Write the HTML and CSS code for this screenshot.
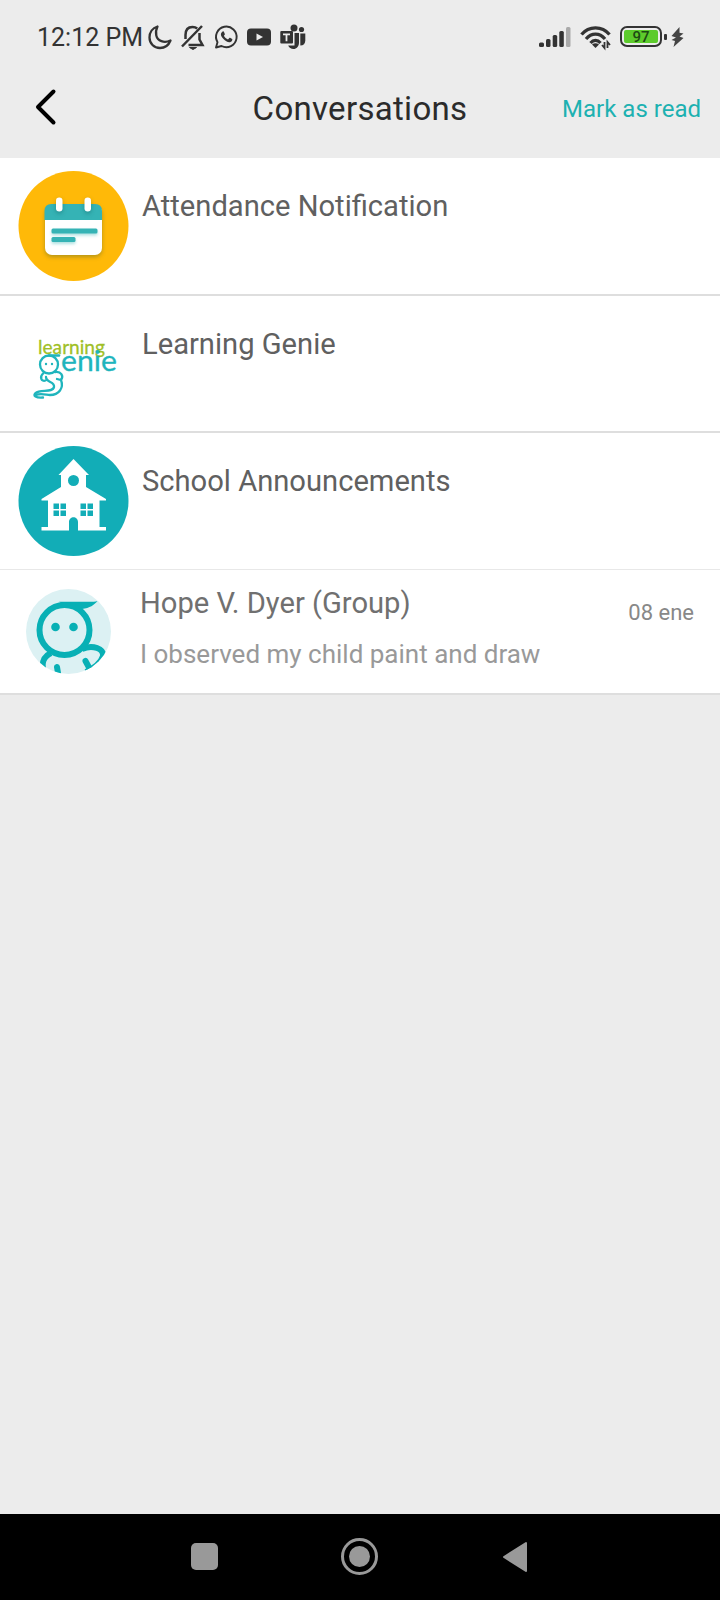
FILE: index.html
```
<!DOCTYPE html>
<html lang="en">
<head>
    <meta charset="UTF-8">
    <meta name="viewport" content="width=device-width, initial-scale=1.0">
    <title>Conversations</title>
    <link rel="stylesheet" href="styles.css">
</head>
<body>

<!-- Status bar -->
<div class="status-bar">
    <span class="clock">12:12 PM</span>
    <div class="status-icons">
        <svg width="24" height="26" viewBox="0 0 24 26" fill="none" stroke="#333" stroke-width="2.3" stroke-linejoin="round">
            <path d="M9.5 2.500C4.5 4 1.500 8.500 1.500 13.500C1.500 19.500 6 24 12 24C16.500 24 20.500 21.500 22.500 16.500C16 19.500 9.500 17 8.300 11.500C7.600 8 8.200 5 9.500 2.500Z"/>
        </svg>
        <svg width="24" height="26" viewBox="0 0 24 26" fill="none" stroke="#333" stroke-width="2.500">
            <path d="M4.500 15V11C4.500 6 7 3 11.500 3C13.500 3 15 3.500 16.200 4.500M18.500 9V15.500L21.500 21H7.500M1 22.500L21 2"/>
            <path d="M8.500 23.500H15.500L12 25.500Z" fill="#333" stroke-width="1"/>
        </svg>
        <svg width="24" height="26" viewBox="0 0 24 26">
            <path d="M2 23.500L3.500 18.200A10.300 10.300 0 1 1 7.500 22Z" fill="none" stroke="#333" stroke-width="1.900" stroke-linejoin="round"/>
            <path d="M8 8C9 7 9.700 7.200 10 8L10.800 10C11 10.700 10.300 11.200 9.900 11.700C10.800 13.500 12.200 14.700 14 15.500L15.300 14.100C15.700 13.700 16.100 13.900 16.500 14.100L18.200 15C18.700 15.400 18 17.500 16.500 18C12.500 19.300 6.500 13 6.900 10C7 9.200 7.500 8.500 8 8Z" fill="#333"/>
        </svg>
        <svg width="24" height="26" viewBox="0 0 24 26">
            <rect x="0" y="4.500" width="24" height="17" rx="4" fill="#333"/>
            <path d="M9.500 9.500L16 13L9.500 16.500Z" fill="#ececec"/>
        </svg>
        <svg width="27" height="26" viewBox="0 0 27 26" fill="#333">
            <circle cx="14" cy="4" r="3.500"/>
            <circle cx="21.500" cy="5.500" r="2.600"/>
            <path d="M14.500 9H19V18.500C19 22.500 16.500 25 13.500 25C11 25 9 23.500 8.200 21.500H14.500Z"/>
            <path d="M20.300 9.500H25.300V16.500C25.300 19.500 23.500 21.500 20.300 21.500Z"/>
            <rect x="0.300" y="7" width="12.700" height="12.500" rx="1"/>
            <path d="M3 10.300H10M6.500 10.300V17.300" fill="none" stroke="#ececec" stroke-width="1.800"/>
        </svg>
    </div>
    <div class="device-icons">
        <svg class="signal" width="32" height="22" viewBox="0 0 32 22" fill="#333">
            <rect x="0" y="16.500" width="5" height="4.500" rx="1.500"/>
            <rect x="7" y="13" width="4.500" height="8" rx="1.500"/>
            <rect x="13.700" y="9" width="4.500" height="12" rx="1.500"/>
            <rect x="20.300" y="5" width="4.500" height="16" rx="1.500"/>
            <rect x="27" y="1" width="4.500" height="20" rx="1.500" fill="#aaa"/>
        </svg>
        <svg class="wifi" width="32" height="24" viewBox="0 0 32 24" fill="none" stroke="#333" stroke-width="3.300">
            <path d="M1.500 9.500C9 0.700 22 0.700 29.500 9.500M6 14C11.500 7.500 19.500 7.500 25 14M10.500 18C13.500 14.500 17.500 14.500 20.500 18"/>
            <path d="M12 19.500Q15.500 17 19 19.500L15.500 23Z" fill="#333" stroke="none"/>
            <path d="M24.500 17V23L22 20M27.500 23V17L30 20" stroke-width="1.800"/>
        </svg>
        <div class="battery"><span>97</span></div>
        <div class="battery-tip"></div>
        <svg class="bolt" width="13" height="20" viewBox="0 0 13 20" fill="#444">
            <path d="M8.500 0L0.500 9L5 10.500L0.500 13L4 14L2.500 20L12.500 11L8.500 9.500L12.500 6.500L8.500 5.800Z"/>
        </svg>
    </div>
</div>

<!-- Header -->
<div class="header">
    <svg class="back" width="24" height="38" viewBox="0 0 24 38" fill="none" stroke="#000" stroke-width="4" stroke-linecap="round" stroke-linejoin="round">
        <path d="M19.500 3.500L4 19L19.500 34.500"/>
    </svg>
    <h1>Conversations</h1>
    <a class="mark-read">Mark as read</a>
</div>

<!-- Conversation list -->
<div class="conversations">
    <div class="row first">
        <svg class="avatar" width="110" height="110" viewBox="0 0 110 110">
            <circle cx="55.500" cy="55" r="55" fill="#ffb908"/>
            <rect class="soft-shadow" x="27" y="34" width="57" height="50" rx="7" fill="#fff"/>
            <path d="M26.500 49V40Q26.500 33 33.500 33H77Q84 33 84 40V49Z" fill="#35b3b5"/>
            <g class="soft-shadow" fill="#fff">
                <rect x="38" y="26.500" width="6.500" height="14" rx="3.200"/>
                <rect x="66.500" y="26.500" width="6.500" height="14" rx="3.200"/>
            </g>
            <g class="line-shadow" fill="#35b3b5">
                <rect x="33.500" y="57.500" width="46" height="5" rx="1.500"/>
                <rect x="33.500" y="66" width="24" height="5" rx="1.500"/>
            </g>
        </svg>
        <div class="name">Attendance Notification</div>
    </div>
    <div class="row">
        <svg class="avatar" width="110" height="110" viewBox="0 0 110 110">
            <text class="logo-text" x="20" y="45" textLength="67" lengthAdjust="spacingAndGlyphs" font-size="19.500" fill="#a0bf27" stroke="#a0bf27">learning</text>
            <text class="logo-text" x="43" y="62" textLength="56" lengthAdjust="spacingAndGlyphs" font-size="29" fill="#1fb5bd" stroke="#1fb5bd">enie</text>
            <g transform="translate(0 -15)" fill="none" stroke="#1fb5bd" stroke-width="2.300" stroke-linecap="round">
                <circle cx="31" cy="70.500" r="9"/>
                <path d="M31 61.500H41" stroke-width="2.500"/>
                <path d="M25.500 79C21 83 23.500 88 27.500 86.500M37 78C43 77 46 82 43 86L39 85M28 83C28 89 37 87 36 93C35 99 22 95 17.500 99C14.500 102 18 104 25 103.500M43 86C46 94 41 101 32 101C27 100.500 22 99 18 101"/>
            </g>
            <circle cx="28" cy="55" r="1.200" fill="#1fb5bd"/>
            <circle cx="34" cy="55" r="1.200" fill="#1fb5bd"/>
        </svg>
        <div class="name">Learning Genie</div>
    </div>
    <div class="row light">
        <svg class="avatar" width="110" height="110" viewBox="0 0 110 110">
            <circle cx="55.500" cy="55" r="55" fill="#12adb7"/>
            <path d="M55.500 13L71 29H68V41L88 53V54.500H81.500V81H88V84.500H60V76C60 69.500 51 69.500 51 76V84.500H23.500V81H30V54.500H23.500V53L43 41V29H40.500Z" fill="#fff"/>
            <g fill="#12adb7">
                <circle cx="55.500" cy="34.500" r="5.500"/>
                <path d="M35.500 57.500h5.500v5.500h-5.500zM42.500 57.500h5.500v5.500h-5.500zM35.500 64.500h5.500v5.500h-5.500zM42.500 64.500h5.500v5.500h-5.500z"/>
                <path d="M62.500 57.500h5.500v5.500h-5.500zM69.500 57.500h5.500v5.500h-5.500zM62.500 64.500h5.500v5.500h-5.500zM69.500 64.500h5.500v5.500h-5.500z"/>
            </g>
        </svg>
        <div class="name">School Announcements</div>
    </div>
    <div class="row group">
        <svg class="avatar" width="86" height="86" viewBox="0 0 86 86">
            <defs><clipPath id="round"><circle cx="43.500" cy="42.500" r="42.500"/></clipPath></defs>
            <g clip-path="url(#round)">
                <rect width="86" height="86" fill="#dcf1f3"/>
                <path d="M26 64C18 68 16 74 19 84M57 60C68 55 79 60 78 67C76 74 69 79 61 83" fill="none" stroke="#08b0b5" stroke-width="6"/>
                <path d="M34 90L32 78M67 84L60.500 72" fill="none" stroke="#08b0b5" stroke-width="6" stroke-linecap="round"/>
                <path d="M34 12.800H61C66 12.800 69 13 72.500 12C69 16 65 19 57 20L46 21Z" fill="#08b0b5"/>
                <circle cx="39.500" cy="41" r="25" fill="#dcf1f3" stroke="#08b0b5" stroke-width="6"/>
                <circle cx="30.500" cy="38" r="4.300" fill="#08b0b5"/>
                <circle cx="48.500" cy="38" r="4.300" fill="#08b0b5"/>
            </g>
        </svg>
        <div class="preview">
            <div class="name">Hope V. Dyer (Group)</div>
            <div class="message">I observed my child paint and draw</div>
        </div>
        <div class="date">08 ene</div>
    </div>
</div>

<!-- Android navigation -->
<div class="nav-bar">
    <div class="recents"></div>
    <div class="home"></div>
    <svg class="nav-back" width="26" height="32" viewBox="0 0 26 32">
        <path d="M2 16L24 2V30Z" fill="#999" stroke="#999" stroke-width="2" stroke-linejoin="round"/>
    </svg>
</div>

</body>
</html>
```
FILE: styles.css
```
* {
    box-sizing: border-box;
}

body {
    font-family: Roboto, sans-serif;
    margin: 0;
    height: 1600px;
    background-color: #ececec;
    display: flex;
    flex-direction: column;
    overflow: hidden;
}

svg {
    display: block;
    flex: none;
    overflow: visible;
}

.status-bar {
    height: 73px;
    padding: 0 36px 0 37px;
    display: flex;
    align-items: center;
    color: #333;
}

.clock {
    width: 111px;
    font-size: 25px;
    white-space: nowrap;
    padding-top: 2px;
}

.status-icons {
    display: flex;
    gap: 9px;
}

.device-icons {
    display: flex;
    align-items: center;
    margin-left: auto;
}

.wifi {
    margin-left: 9px;
}

.battery {
    width: 42px;
    height: 21px;
    margin-left: 8px;
    padding: 2px;
    border: 2px solid #333;
    border-radius: 7px;
}

.battery span {
    display: block;
    height: 13px;
    border-radius: 2px;
    background-color: #5ccb2b;
    font-size: 15px;
    font-weight: 500;
    line-height: 14px;
    text-align: center;
    color: #1c4a13;
}

.battery-tip {
    width: 3px;
    height: 6px;
    margin: 0 4px 0 2px;
    border-radius: 1px;
    background-color: #333;
}

.header {
    height: 85px;
    padding: 0 19px 0 34px;
    display: grid;
    grid-template-columns: 200px 1fr 200px;
    align-items: center;
}

.back {
    margin-bottom: 17px;
}

h1 {
    margin: 0 0 13px;
    font-size: 33px;
    font-weight: 400;
    line-height: 40px;
    letter-spacing: 0.3px;
    text-align: center;
    padding-right: 15px;
    color: #2b2b2b;
}

.mark-read {
    margin-bottom: 13px;
    font-size: 24px;
    text-align: right;
    color: #1db1b1;
}

.conversations {
    background-color: #fff;
}

.row {
    height: 137px;
    padding: 13px 26px 0 18px;
    border-bottom: 2px solid #dedede;
    display: flex;
    align-items: flex-start;
}

.row.first {
    height: 138px;
}

.row.light {
    border-bottom: 1px solid #e8e8e8;
}

.name {
    margin: 18px 0 0 14px;
    font-size: 29.15px;
    line-height: 34px;
    white-space: nowrap;
    color: #606060;
}

.soft-shadow {
    filter: drop-shadow(0 2px 2px rgba(0, 60, 60, 0.3));
}

.line-shadow {
    filter: drop-shadow(0 2px 1.5px rgba(53, 179, 181, 0.4));
}

.logo-text {
    font-family: Lato, sans-serif;
    stroke-width: 0.3px;
}

.row.group {
    height: 125px;
    padding: 19px 26px 0 25px;
}

.preview {
    margin-left: 29px;
}

.group .name {
    margin: -3px 0 0;
    color: #707070;
}

.message {
    margin-top: 19px;
    font-size: 26px;
    line-height: 30px;
    white-space: nowrap;
    color: #999;
}

.date {
    margin: 11px 0 0 auto;
    font-size: 22px;
    line-height: 26px;
    color: #888;
}

.nav-bar {
    height: 86px;
    margin-top: auto;
    padding: 0 0 1px 191px;
    display: flex;
    align-items: center;
    background-color: #000;
}

.recents {
    width: 27px;
    height: 27px;
    border-radius: 5px;
    background-color: #999;
}

.home {
    width: 37px;
    height: 37px;
    margin-left: 123px;
    padding: 5px;
    border: 3px solid #999;
    border-radius: 50%;
    background: #999 content-box;
}

.nav-back {
    margin-left: 124px;
}
```
